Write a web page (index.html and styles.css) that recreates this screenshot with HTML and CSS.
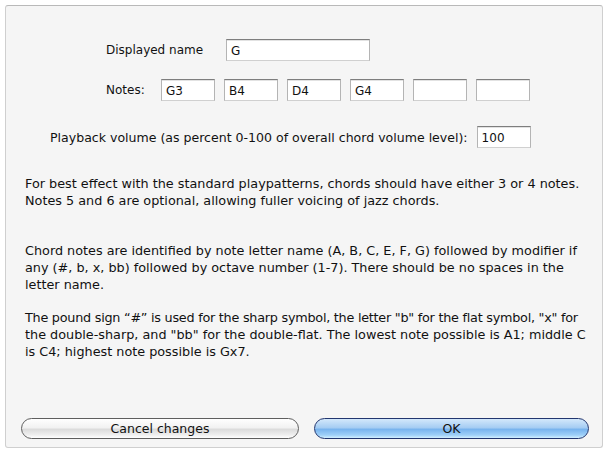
FILE: index.html
```html
<!DOCTYPE html>
<html>
<head>
<meta charset="utf-8">
<link rel="stylesheet" href="styles.css">
</head>
<body>
<div class="panel">
  <div class="row row-name">
    <span class="label label-name">Displayed name</span>
    <div class="field field-name">G</div>
  </div>
  <div class="row row-notes">
    <span class="label label-notes">Notes:</span>
    <div class="notes">
      <div class="field note">G3</div>
      <div class="field note">B4</div>
      <div class="field note">D4</div>
      <div class="field note">G4</div>
      <div class="field note"></div>
      <div class="field note"></div>
    </div>
  </div>
  <div class="row row-volume">
    <span class="label label-volume">Playback volume (as percent 0-100 of overall chord volume level):</span>
    <div class="field note">100</div>
  </div>
  <p class="para p1">For best effect with the standard playpatterns, chords should have either 3 or 4 notes.<br>Notes 5 and 6 are optional, allowing fuller voicing of jazz chords.</p>
  <p class="para p2">Chord notes are identified by note letter name (A, B, C, E, F, G) followed by modifier if<br>any (#, b, x, bb) followed by octave number (1-7). There should be no spaces in the<br>letter name.</p>
  <p class="para p3"><span class="tight">The pound sign “#” is used for the sharp symbol, the letter "b" for the flat symbol, "x" for</span><br>the double-sharp, and "bb" for the double-flat. The lowest note possible is A1; middle C<br>is C4; highest note possible is Gx7.</p>
  <div class="buttons">
    <div class="btn btn-cancel">Cancel changes</div>
    <div class="btn btn-ok">OK</div>
  </div>
</div>
</body>
</html>
```

FILE: styles.css
```css
html, body {
  margin: 0;
  padding: 0;
  background: #ffffff;
}
body {
  font-family: "DejaVu Sans", "Liberation Sans", sans-serif;
  font-size: 12px;
  color: #111;
}
.panel {
  box-sizing: border-box;
  margin: 5px 0 0 5px;
  width: 598px;
  height: 443px;
  background: #f5f5f5;
  border: 1px solid #cfcfcf;
  border-top-color: #b9b9b9;
  border-radius: 3px;
  display: flex;
  flex-direction: column;
  padding-top: 33px;
}
.row {
  display: flex;
  align-items: center;
}
.row-name {
  padding-left: 100px;
}
.label-name {
  width: 120px;
}
.row-notes {
  margin-top: 18px;
  padding-left: 100px;
}
.label-notes {
  width: 55px;
}
.notes {
  display: flex;
  gap: 9px;
}
.row-volume {
  margin-top: 25px;
  padding-left: 44px;
}
.label-volume {
  font-size: 12.55px;
  margin-right: 9px;
}
.field {
  box-sizing: border-box;
  height: 22px;
  background: #fff;
  border: 1px solid #b4b4b4;
  border-top-color: #7e7e7e;
  border-bottom-color: #d0d0d0;
  box-shadow: inset 0 1px 0 #e2e2e2;
  padding: 3px 4px 0;
  line-height: 16px;
}
.field-name {
  width: 144px;
}
.note {
  width: 54px;
}
.para {
  margin: 0;
  padding-left: 19px;
  line-height: 17px;
  font-size: 12.8px;
}
.tight {
  letter-spacing: -0.25px;
}
.p1 {
  margin-top: 27px;
}
.p2 {
  margin-top: 33px;
}
.p3 {
  margin-top: 16px;
}
.buttons {
  margin-top: auto;
  margin-bottom: 8px;
  display: flex;
  gap: 15px;
  padding-left: 15px;
}
.btn {
  box-sizing: border-box;
  height: 21px;
  border-radius: 11px;
  text-align: center;
  line-height: 19px;
  font-size: 12.5px;
}
.btn-cancel {
  width: 278px;
  border: 1px solid #5e5e5e;
  background: linear-gradient(#ffffff 0%, #f2f2f2 45%, #dcdcdc 55%, #f0f0f0 85%, #ffffff 100%);
}
.btn-ok {
  width: 275px;
  border: 1px solid #22366f;
  background: linear-gradient(#d3e8fb 0%, #a6cdf3 45%, #79b4ee 55%, #9fd0f8 85%, #d3f0ff 100%);
}
```
